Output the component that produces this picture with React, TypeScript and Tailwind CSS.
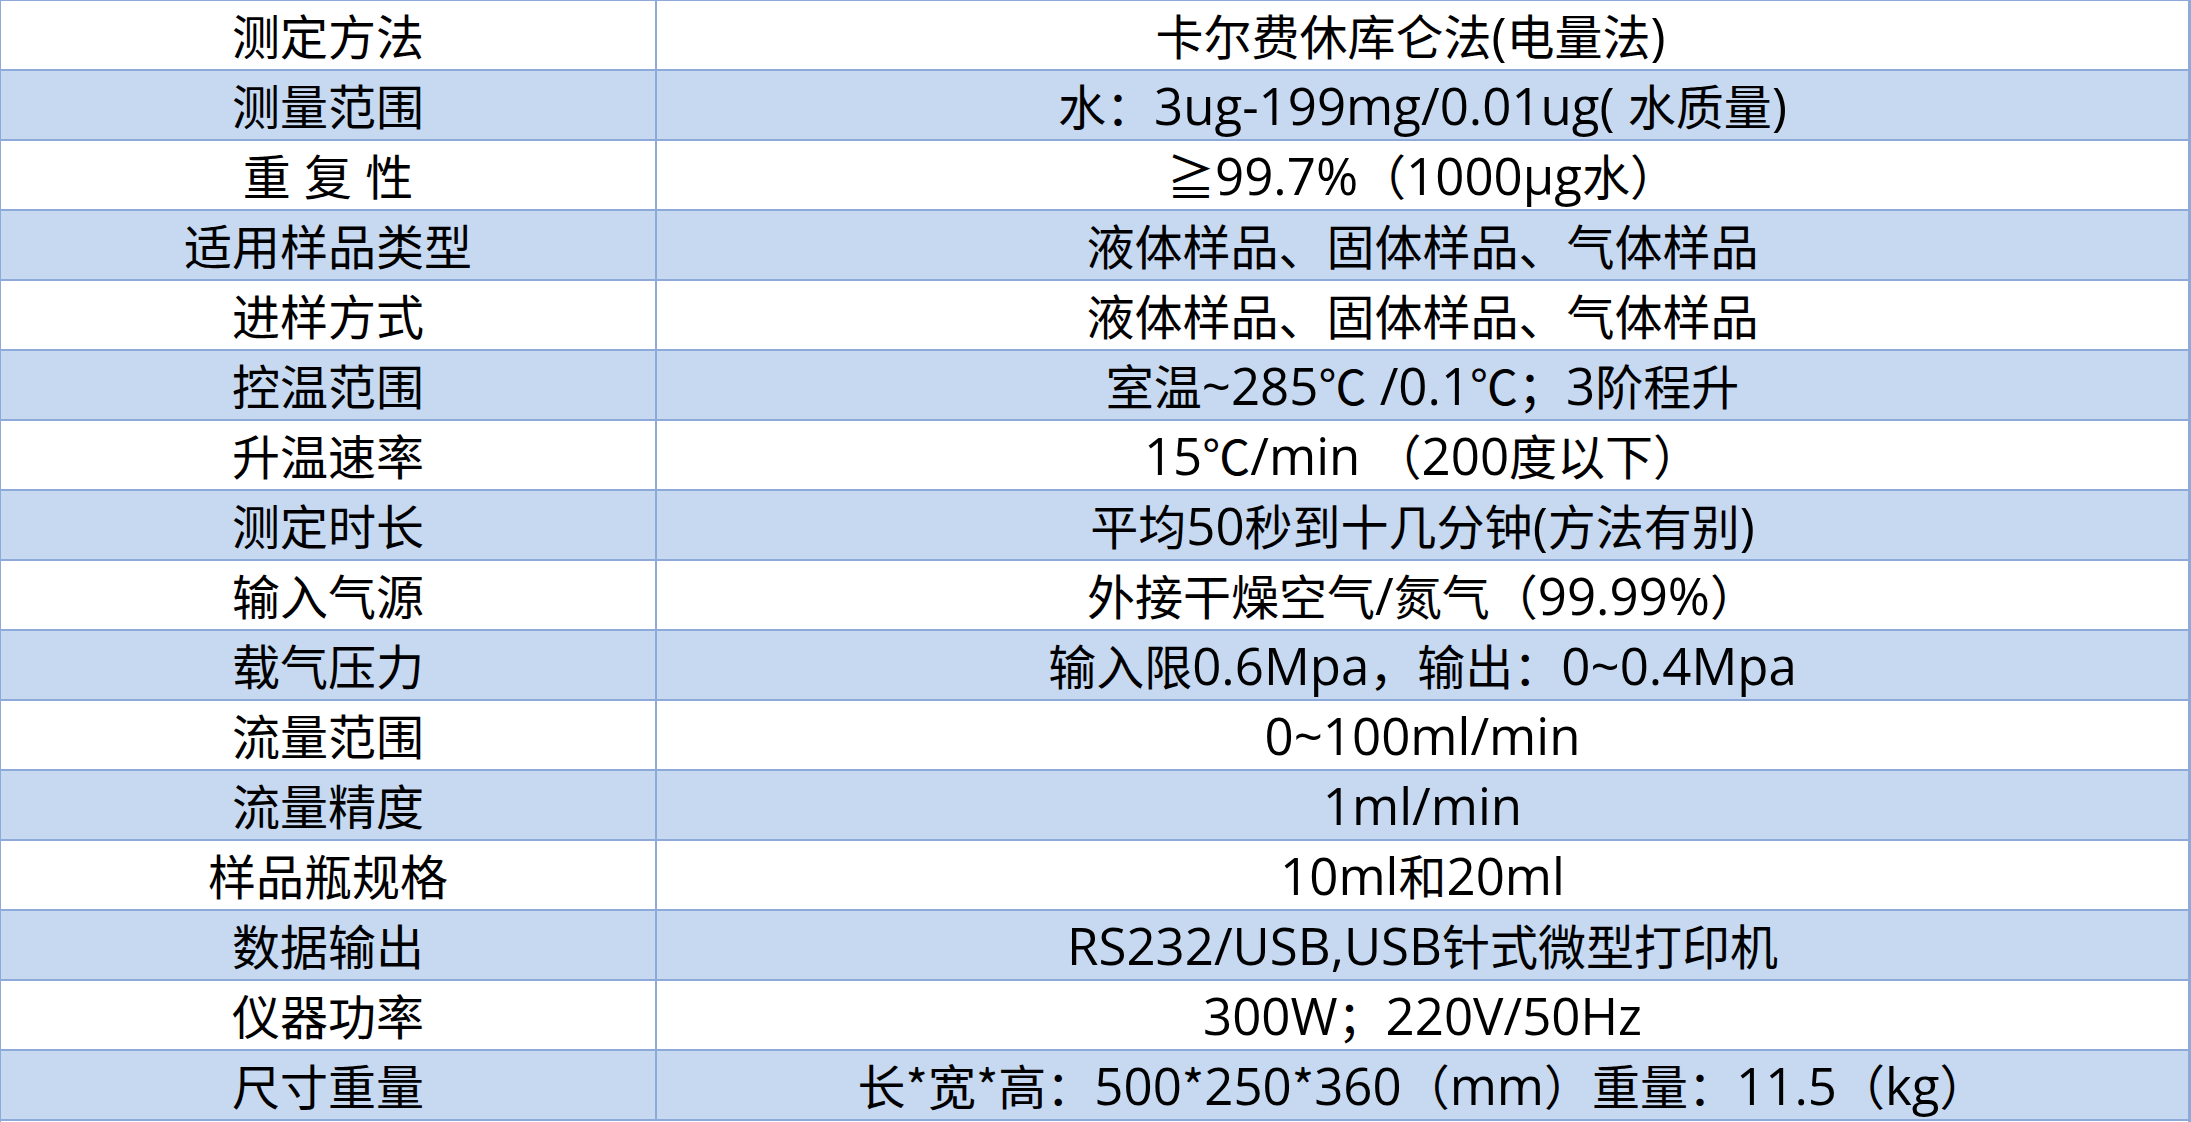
const rows: [string, string][] = [
  ["测定方法", "卡尔费休库仑法(电量法)"],
  ["测量范围", "水：3ug-199mg/0.01ug( 水质量)"],
  ["重 复 性", "≧99.7%（1000μg水）"],
  ["适用样品类型", "液体样品、固体样品、气体样品"],
  ["进样方式", "液体样品、固体样品、气体样品"],
  ["控温范围", "室温~285℃ /0.1℃；3阶程升"],
  ["升温速率", "15℃/min （200度以下）"],
  ["测定时长", "平均50秒到十几分钟(方法有别)"],
  ["输入气源", "外接干燥空气/氮气（99.99%）"],
  ["载气压力", "输入限0.6Mpa，输出：0~0.4Mpa"],
  ["流量范围", "0~100ml/min"],
  ["流量精度", "1ml/min"],
  ["样品瓶规格", "10ml和20ml"],
  ["数据输出", "RS232/USB,USB针式微型打印机"],
  ["仪器功率", "300W；220V/50Hz"],
  ["尺寸重量", "长*宽*高：500*250*360（mm）重量：11.5（kg）"],
];

// CJK (and the narrow asterisk) stay on Noto CJK; latin runs are a bit larger,
// like the YaHei latin glyphs in the original sheet
const cjk = /([*\u2100-\u22ff\u3000-\u303f\u3400-\u9fff\uff00-\uffef]+)/;

const Mixed = ({ text }: { text: string }) => (
  <>
    {text.split(cjk).map((part, i) =>
      part === "" ? null : cjk.test(part) ? (
        <span key={i} style={{ fontFamily: '"Noto Sans CJK SC", sans-serif' }}>
          {part}
        </span>
      ) : (
        <span key={i} className="text-[51px]">
          {part}
        </span>
      )
    )}
  </>
);

export default function App() {
  return (
    <div
      className="w-[2191px] h-[1122px] bg-white text-black text-[48px] leading-none border-t border-l border-r-[3px] border-[#8eaadb] flex flex-col"
      style={{ fontFamily: '"Open Sans", "Noto Sans CJK SC", sans-serif' }}
    >
      {rows.map(([label, value], i) => (
        <div
          key={label + i}
          className={`flex h-[70px] shrink-0 border-b-2 border-[#8eaadb] ${
            i % 2 === 1 ? "bg-[#c6d9f1]" : "bg-white"
          }`}
        >
          <div className="w-[656px] shrink-0 border-r-2 border-[#8eaadb] flex items-center justify-center whitespace-pre">
            <span>
              <Mixed text={label} />
            </span>
          </div>
          <div className="flex-1 flex items-center justify-center whitespace-pre">
            <span className={i === 0 ? "pr-[24px]" : ""}>
              <Mixed text={value} />
            </span>
          </div>
        </div>
      ))}
    </div>
  );
}
